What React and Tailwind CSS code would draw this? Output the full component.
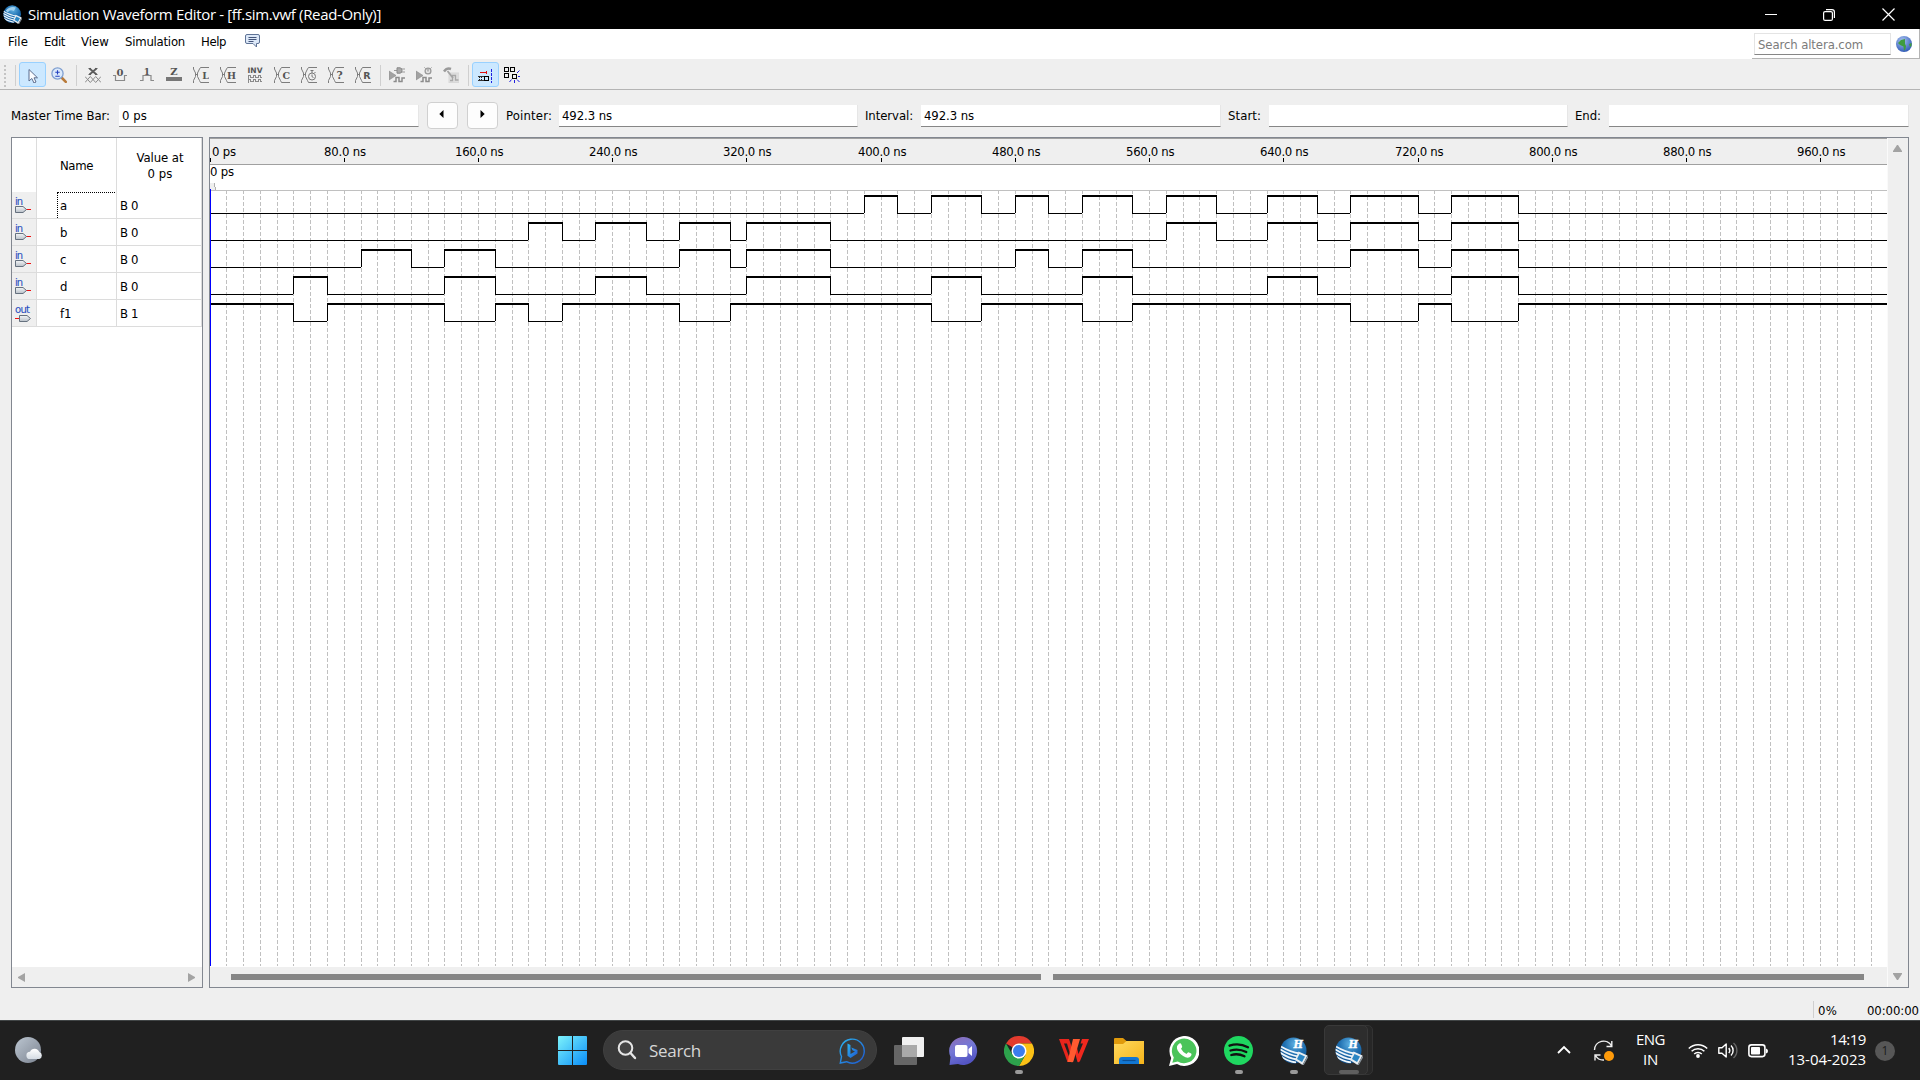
import { useLayoutEffect, useRef, useState } from "react";

const UI = "font-['DejaVu_Sans_Condensed','DejaVu_Sans',sans-serif]";
const SEGOE = "font-['Open_Sans','Noto_Sans',sans-serif]";

/* Text tracked so that it fills exactly w pixels. */
function T({ w, children, className = "" }) {
  const ref = useRef(null);
  const [ls, setLs] = useState(0);
  useLayoutEffect(() => {
    const n = ref.current.getBoundingClientRect().width;
    setLs((w - n) / String(children).length);
  }, []);
  return (
    <span className={"inline-block shrink-0 whitespace-nowrap " + className} style={{ width: w }}>
      <span ref={ref} className="inline-block" style={{ letterSpacing: ls }}>{children}</span>
    </span>
  );
}

function QuartusIcon({ size, mark }) {
  return (
    <svg width={size} height={size} viewBox="0 0 28 28">
      <defs>
        <radialGradient id="qg" cx="0.55" cy="0.25" r="0.8">
          <stop offset="0" stopColor="#5fb0e2" />
          <stop offset="0.5" stopColor="#1f6fb0" />
          <stop offset="1" stopColor="#0d4a86" />
        </radialGradient>
        <clipPath id="qc"><circle cx="13.5" cy="13.5" r="13" /></clipPath>
      </defs>
      <circle cx="13.5" cy="13.5" r="13" fill="url(#qg)" />
      <g clipPath="url(#qc)" fill="none" stroke="#eef5fa" strokeWidth="1.8">
        <path d="M0 9C5 12 12 15.500 20 16.500" />
        <path d="M0 12.300C5 15.500 11 18.500 18 19.500" />
        <path d="M0 15.600C5 19 10 21.500 17 22.500" />
        <path d="M1 19.500C5 22.500 10 24.500 16 25.500" />
      </g>
      {mark ? (
        <text x="13.500" y="11" fontSize="12" fontStyle="italic" fontWeight="bold" fill="#fff" stroke="#fff" strokeWidth=".5" fontFamily="Liberation Serif">H</text>
      ) : (
        <path d="M4 8Q10 1 19 3.500L16 9Q10 6 7 11Z" fill="#9fd0ee" />
      )}
      <path d="M18.500 14.500L27.500 18.500L22.500 28L15 23Z" fill="#e8edf1" />
      <path d="M19.500 17L25 19.500L22 25L17 22Z" fill="#2a86c4" />
      <path d="M27.500 18.500L28 20.500L23.500 28.500L22.500 28Z" fill="#8a949c" />
    </svg>
  );
}

/* ---------- toolbar ---------- */
const Ico = ({ children }) => (
  <svg width="16" height="16" viewBox="0 0 16 16" fill="none" stroke="#8a8a8a" strokeWidth="1">{children}</svg>
);
const Glyph = ({ x, y, s = 9.5, children, sans }) => (
  <text x={x} y={y} fontSize={s} fontWeight="bold" textAnchor="middle" fill="#545454" stroke="none" fontFamily={sans ? "DejaVu Sans" : "DejaVu Serif"}>{children}</text>
);
const Cross = () => <path d="M.5 0V2L2.500 6V9.500L.5 13.500V16M2.500 7.500H4.500M16 .5H7.500L6.500 2L4.500 6V9.500L6.500 13.500L7.500 15.500H16" stroke="#7d7d7d" />;

function ToolButton({ active, children }) {
  return (
    <div className={"flex h-[25px] w-[27px] shrink-0 justify-center rounded-[3px] border pr-px pt-1 " + (active ? "border-[#99d1ff] bg-[#cce8ff]" : "border-transparent")}>
      {children}
    </div>
  );
}
const Sep = () => <div className="flex h-[21px] w-[7px] shrink-0 justify-center"><div className="w-px bg-[#cfcfcf]" /></div>;

const SimIcon = ({ children }) => (
  <Ico>
    <path d="M0 4L7 8.500L0 13Z" fill="#a2a2a2" stroke="#8d8d8d" strokeWidth=".6" />
    <path d="M4.500 14.500H7V10.500H10V14.500H13V11H16" stroke="#8c8c8c" strokeWidth="1.500" />
    {children}
  </Ico>
);

function Toolbar() {
  return (
    <div className="flex h-[29px] items-start border-b border-[#b4b4b4] bg-[#efefef] pt-px">
      <div className="flex h-[25px] w-[12px] flex-col justify-between pl-1 pt-[3px]">
        {[0, 1, 2, 3, 4, 5].map((i) => <div key={i} className="size-[2px] bg-[#c4c4c4]" />)}
      </div>
      <div className="mt-[3px]"><Sep /></div>
      <ToolButton active>
        <svg width="16" height="16" viewBox="0 0 16 16"><path d="M5 2.500V14L7.800 11.500L10 16L12 15L10 10.800H13.500Z" fill="#fafcff" stroke="#5b6b8c" /></svg>
      </ToolButton>
      <ToolButton>
        <svg width="16" height="16" viewBox="0 0 16 16">
          <path d="M11 11L14.800 14.800" stroke="#b97b3b" strokeWidth="2.600" strokeLinecap="round" />
          <circle cx="6.500" cy="6.500" r="5.600" fill="#dbe9fb" stroke="#7f9fd0" strokeWidth="1.300" />
          <path d="M6.500 3.200V7.400M4.300 5.300H8.700M4.300 9.300H8.700" stroke="#2442c0" strokeWidth="1.100" />
        </svg>
      </ToolButton>
      <div className="mt-[3px]"><Sep /></div>
      <ToolButton>
        <Ico>
          <path d="M4.500 1.500L11.500 7.500M11.500 1.500L4.500 7.500" stroke="#5c5c5c" strokeWidth="1.800" />
          <path d="M3.500 1.500H6M10 1.500H12.500M3.500 7.500H6M10 7.500H12.500" stroke="#5c5c5c" />
          <path d="M0 9.500L5.300 15.500L10.700 9.500L16 15.500M0 15.500L5.300 9.500L10.700 15.500L16 9.500" />
        </Ico>
      </ToolButton>
      <ToolButton><Ico><Glyph x={8} y={9} s={10}>0</Glyph><path d="M1 8.500H3.500V13.500H12.500V8.500H15" strokeWidth="1.200" /></Ico></ToolButton>
      <ToolButton><Ico><Glyph x={8} y={7.500} s={9}>1</Glyph><path d="M1 13.500H4V8.500H12V13.500H15" strokeWidth="1.200" /></Ico></ToolButton>
      <ToolButton><Ico><Glyph x={8} y={8} s={10}>Z</Glyph><rect x="0" y="10" width="16" height="4" fill="#777" stroke="none" /></Ico></ToolButton>
      <ToolButton><Ico><Cross /><Glyph x={12.500} y={11.500}>L</Glyph></Ico></ToolButton>
      <ToolButton><Ico><Cross /><Glyph x={11.500} y={11.500}>H</Glyph></Ico></ToolButton>
      <ToolButton>
        <Ico>
          <Glyph x={8} y={6} s={7.500} sans>INV</Glyph>
          <path shapeRendering="crispEdges" d="M1 11.500V8.500H3.500V10.500H6V8.500H8.500V10.500H11V8.500H13.500V10.500H15M1 15.500V12.500H3.500V14.500H6V12.500H8.500V14.500H11V12.500H13.500V14.500H15" />
        </Ico>
      </ToolButton>
      <ToolButton><Ico><Cross /><Glyph x={12.200} y={11.500}>C</Glyph></Ico></ToolButton>
      <ToolButton><Ico><Cross /><circle cx="11" cy="9.500" r="3.500" fill="#efefef" stroke="#777" /><path d="M11 7.500V9.700L12.500 10.500M9.500 3.500H12.500M11 3.500V6M13.500 6L14.500 5" stroke="#777" /></Ico></ToolButton>
      <ToolButton><Ico><Cross /><Glyph x={11.500} y={11.500} s={10.500}>?</Glyph></Ico></ToolButton>
      <ToolButton><Ico><Cross /><Glyph x={12} y={11.500} sans>R</Glyph></Ico></ToolButton>
      <div className="mt-[3px]"><Sep /></div>
      <ToolButton><SimIcon><path d="M5 3.500H8M12 2H16M12 5H16" stroke="#999" /><path d="M8 .8H11Q13 1 13 3.500Q13 6 11 6.200H8Z" fill="#aaa" stroke="#888" /></SimIcon></ToolButton>
      <ToolButton><SimIcon><circle cx="12" cy="4" r="2.900" fill="#e4e4e4" stroke="#999" strokeWidth="1.300" /><path d="M12 2V4.500M8.500 .5L9.500 1.500M15.500 .5L14.500 1.500" stroke="#888" /></SimIcon></ToolButton>
      <ToolButton>
        <Ico>
          <rect x="6" y="6" width="10" height="9.500" fill="#dedede" stroke="#d8d8d8" />
          <path d="M7 13.500H9.500V8.500H12.500V13H15.500" stroke="#a8a8a8" strokeWidth="1.300" />
          <path d="M1 4.500Q4 .5 8 2" stroke="#999" strokeWidth="2.500" /><path d="M4.500 4L10 11" stroke="#a5a5a5" strokeWidth="1.800" />
        </Ico>
      </ToolButton>
      <div className="mt-[3px]"><Sep /></div>
      <ToolButton active>
        <Ico>
          <g shapeRendering="crispEdges">
            <path d="M3 5.500H10" stroke="#e01010" /><path d="M9.500 4V7" stroke="#e01010" />
            <path d="M1 9.500H7M1 13.500H7" stroke="#333" /><path d="M2.500 10V13M4.500 10V13" stroke="#222" strokeDasharray="1 1" />
            <path d="M7.500 9.500H11.500V13.500H7.500Z" stroke="#000" /><path d="M14.500 2V16" stroke="#2020e0" strokeDasharray="3 1" />
          </g>
        </Ico>
      </ToolButton>
      <ToolButton>
        <Ico>
          <g shapeRendering="crispEdges" stroke="#000"><path d="M.5 .5H4.500V4.500H.5ZM6.500 .5H10.500V4.500H6.500ZM.5 6.500H4.500V10.500H.5ZM8.500 7.500H12.500V11.500H8.500Z" /></g>
          <path d="M13 6L15.500 3.500M14 9.500H16M13 12.500L15.500 15M10.500 13V16M7.500 12.500L5.500 15" stroke="#2020e0" />
        </Ico>
      </ToolButton>
    </div>
  );
}

/* ---------- time bar ---------- */
const Field = ({ value, vw, className }) => (
  <div className={"mt-[3px] h-[22px] shrink-0 border-b border-b-[#868686] border-r border-r-[#e6e6e6] bg-white pl-[3px] text-[13px] leading-[21px] " + className}>
    {value && <T w={vw}>{value}</T>}
  </div>
);
const Step = ({ left }) => (
  <div className="flex h-[27px] w-[31px] shrink-0 items-center justify-center rounded-[4px] border border-[#d0d0d0] bg-[#fdfdfd]">
    <svg width="5" height="8" viewBox="0 0 5 8" className={left ? "-mt-[3px] mr-[3px]" : "-mt-[3px]"}><path d={left ? "M4.500 0V8L.3 4Z" : "M.5 0V8L4.700 4Z"} fill="#000" /></svg>
  </div>
);

function TimeBar() {
  return (
    <div className="flex h-[47px] items-start pl-[11px] pt-[12px] text-[13px] leading-[27px]">
      <T w={99}>Master Time Bar:</T>
      <Field className="ml-[9px] w-[300px]" value="0 ps" vw={25} />
      <div className="ml-2 flex gap-[9px]"><Step left /><Step /></div>
      <T w={46} className="ml-2">Pointer:</T>
      <Field className="ml-[7px] w-[299px]" value="492.3 ns" vw={50} />
      <T w={48} className="ml-[7px]">Interval:</T>
      <Field className="ml-2 w-[300px]" value="492.3 ns" vw={50} />
      <T w={33} className="ml-[7px]">Start:</T>
      <Field className="ml-2 w-[299px]" />
      <T w={26} className="ml-[7px]">End:</T>
      <Field className="ml-2 w-[300px]" />
    </div>
  );
}

/* ---------- signal list ---------- */
const SIGNALS = [
  { name: "a", v: "B 0", high: [[39, 41], [43, 46], [48, 50], [52, 55], [57, 60], [63, 66], [68, 72], [74, 78]] },
  { name: "b", v: "B 0", high: [[19, 21], [23, 26], [28, 31], [32, 37], [57, 60], [63, 66], [68, 72], [74, 78]] },
  { name: "c", v: "B 0", high: [[9, 12], [14, 17], [28, 31], [32, 37], [48, 50], [52, 55], [68, 72], [74, 78]] },
  { name: "d", v: "B 0", high: [[5, 7], [14, 17], [23, 26], [32, 37], [43, 46], [52, 55], [63, 66], [74, 78]] },
  { name: "f1", v: "B 1", out: true, high: [[0, 5], [7, 14], [17, 19], [21, 28], [31, 43], [46, 52], [55, 68], [72, 74], [78, 101]] },
];

function PinIcon({ out }) {
  return (
    <svg width="20" height="22" viewBox="0 0 20 22">
      <defs><linearGradient id="pin" x1="0" y1="0" x2="0" y2="1"><stop offset="0" stopColor="#f4f6f8" /><stop offset="1" stopColor="#b9c0c8" /></linearGradient></defs>
      <text x="0" y="8.500" fontSize="10" fill="#2a4fc0" stroke="#2a4fc0" strokeWidth=".1" fontFamily="DejaVu Sans" textLength={out ? 15 : 8}>{out ? "out" : "in"}</text>
      {out ? (
        <g><path d="M0 14.500H5" stroke="#f01010" /><path d="M4.500 11.500H12L15.500 14.500L12 17.500H4.500Z" fill="url(#pin)" stroke="#66717f" /></g>
      ) : (
        <g><path d="M11 13.500H16" stroke="#f01010" /><path d="M.5 10.500H8L11.500 13.500L8 16.500H.5Z" fill="url(#pin)" stroke="#66717f" /></g>
      )}
    </svg>
  );
}

function SignalList() {
  return (
    <div className="flex h-[851px] w-[192px] shrink-0 flex-col border border-[#828790] bg-white text-[13px]">
      <div className="flex h-[54px]">
        <div className="w-[25px] border-r border-[#dcdcdc]" />
        <div className="w-[80px] border-r border-[#dcdcdc] pl-[23px] pt-[20px] leading-4"><T w={33}>Name</T></div>
        <div className="flex w-[85px] flex-col items-center border-r border-[#dcdcdc] pl-[2px] pt-[12px] leading-4"><T w={47}>Value at</T><T w={25}>0 ps</T></div>
      </div>
      {SIGNALS.map((s, i) => (
        <div key={s.name} className="flex h-[27px] border-b border-[#dcdcdc] leading-[27px]">
          <div className="w-[25px] border-r border-[#dcdcdc] bg-[#efefef] pl-[3px] pt-[4px]"><PinIcon out={s.out} /></div>
          <div className="flex w-[80px] border-r border-[#dcdcdc] pl-[20px] pr-px">
            <div className={"w-full " + (i === 0 ? "h-[26px] border-l border-t border-dotted border-black pl-[2px] leading-[25px]" : "pl-[3px]")}>{s.name}</div>
          </div>
          <div className="w-[85px] border-r border-[#dcdcdc] pl-[3px]"><T w={18}>{s.v}</T></div>
        </div>
      ))}
      <div className="mt-auto flex h-5 items-center justify-between bg-[#efefef] pl-[6px] pr-[7px]">
        <svg width="7" height="9"><path d="M7 0V9L0 5V4Z" fill="#a3a3a3" /></svg>
        <svg width="7" height="9"><path d="M0 0V9L7 5V4Z" fill="#a3a3a3" /></svg>
      </div>
    </div>
  );
}

/* ---------- waveform ---------- */
const X = (t) => Math.floor(t * 16.7785);
const END = 1677;

function Wave({ high, y }) {
  const d = [];
  let cur = 0;
  high.forEach(([a, b]) => {
    const xa = X(a);
    const xb = Math.min(X(b), END);
    if (xa > cur) d.push(<rect key={"l" + a} x={cur} y={y + 18} width={xa - cur} height="1" />);
    d.push(<rect key={"h" + a} x={xa} y={y} width={xb - xa + 1} height="2" />);
    if (a > 0) d.push(<rect key={"r" + a} x={xa} y={y} width="1" height="18" />);
    if (xb < END) d.push(<rect key={"f" + a} x={xb} y={y} width="1" height="18" />);
    cur = xb;
  });
  if (cur < END) d.push(<rect key="end" x={cur} y={y + 18} width={END - cur} height="1" />);
  return <g fill="#000">{d}</g>;
}

function Waveform() {
  const labels = Array.from({ length: 12 }, (_, i) => i + 1);
  const grid = Array.from({ length: 99 }, (_, i) => i + 1);
  return (
    <div className="ml-[6px] flex h-[851px] w-[1700px] shrink-0 border border-[#828790]">
      <div className="flex w-[1677px] flex-col">
        <svg width="1677" height="27" viewBox="0 0 1677 27" shapeRendering="crispEdges">
          <rect width="1677" height="27" fill="#efefef" />
          <rect width="1677" height="1" fill="#a0a0a0" />
          <rect y="26" width="1677" height="1" fill="#a0a0a0" />
          <g fontSize="13" fontFamily="DejaVu Sans Condensed, DejaVu Sans">
            <text x="2" y="18" textLength="24">0 ps</text>
            <rect x="0" y="20" width="1" height="4" />
            {labels.map((i) => (
              <g key={i}>
                <text x={X(i * 8) - (i === 1 ? 20 : 23)} y="18" textLength={i === 1 ? 42 : 48.5}>{i * 80}.0 ns</text>
                <rect x={X(i * 8)} y="20" width="1" height="4" />
              </g>
            ))}
          </g>
        </svg>
        <svg width="1677" height="802" viewBox="0 0 1677 802" shapeRendering="crispEdges">
          <rect width="1677" height="802" fill="#fff" />
          <text x="0" y="11" fontSize="13" fontFamily="DejaVu Sans Condensed, DejaVu Sans" textLength="24">0 ps</text>
          <path d="M0 18H4V22H5V25H0Z" fill="#efefef" />
          <path d="M4.500 18V22M5.500 22V25" stroke="#b0b0b0" fill="none" />
          <g stroke="#c0c0c0" strokeDasharray="4 2">
            {grid.map((t) => <path key={t} d={`M${X(t) + 0.5} 25V801`} />)}
          </g>
          <rect y="25" width="1677" height="1" fill="#c0c0c0" />
          {SIGNALS.map((s, i) => <Wave key={s.name} high={s.high} y={30 + i * 27} />)}
          <rect y="24" width="1" height="777" fill="#0000ff" />
        </svg>
        <div className="flex h-5 items-center bg-[#efefef] pl-[21px]">
          <div className="h-[6px] w-[810px] bg-[#868686]" />
          <div className="ml-3 h-[6px] w-[811px] bg-[#868686]" />
        </div>
      </div>
      <div className="flex w-[21px] flex-col items-center justify-between border-l border-[#fafafa] bg-[#efefef] pb-[7px] pr-[2px] pt-[7px]">
        <svg width="9" height="7"><path d="M0 7H9V6L5 0H4L0 6Z" fill="#a3a3a3" /></svg>
        <svg width="9" height="7"><path d="M0 0H9V1L5 7H4L0 1Z" fill="#a3a3a3" /></svg>
      </div>
    </div>
  );
}

/* ---------- taskbar ---------- */
function Slot({ children, dot, active }) {
  return (
    <div className="relative flex h-[59px] w-[55px] shrink-0 items-center justify-center">
      {active && (
        <>
          <div className="absolute left-[10px] top-[4px] h-[50px] w-[42px] rounded-[5px] border border-[#333] bg-[#272727]" />
          <div className="absolute left-[3px] top-[4px] h-[50px] w-[44px] rounded-[5px] border border-[#393939] bg-[#2d2d2d]" />
        </>
      )}
      <div className="relative">{children}</div>
      {dot && <div className={"absolute top-[49px] h-[4px] rounded-full " + (active ? "w-5 bg-[#5f5f5f]" : "w-2 bg-[#9a9a9a]")} />}
    </div>
  );
}

function Taskbar() {
  return (
    <div className={"flex h-[60px] items-start border-t border-[#414546] bg-[#202020] text-white " + SEGOE}>
      <div className="flex h-[59px] w-[545px] items-center pl-[15px]">
        <svg width="29" height="27" viewBox="0 0 29 27">
          <defs>
            <linearGradient id="moon" x1="0" y1="0" x2="1" y2="1"><stop offset="0" stopColor="#bcc6d1" /><stop offset="1" stopColor="#7b8390" /></linearGradient>
            <linearGradient id="cl" x1="0" y1="0" x2="0" y2="1"><stop offset="0" stopColor="#fff" /><stop offset="1" stopColor="#d5dce4" /></linearGradient>
          </defs>
          <circle cx="13" cy="13" r="13" fill="url(#moon)" />
          <path d="M15 22a3.600 3.600 0 0 1 0-7.200a5 5 0 0 1 9.300 .3a3.600 3.600 0 0 1 0 6.900Z" fill="url(#cl)" />
        </svg>
      </div>
      <Slot>
        <svg width="29" height="29" viewBox="0 0 29 29">
          <defs><linearGradient id="win" x1="0" y1="0" x2="1" y2="1"><stop offset="0" stopColor="#7df3fb" /><stop offset="1" stopColor="#0a8df8" /></linearGradient></defs>
          <path d="M0 1Q0 0 1 0H14V14H0ZM15 0H28Q29 0 29 1V14H15ZM0 15H14V29H1Q0 29 0 28ZM15 15H29V28Q29 29 28 29H15Z" fill="url(#win)" />
        </svg>
      </Slot>
      <div className="ml-[3px] mr-[4px] mt-[9px] flex h-[40px] w-[274px] shrink-0 items-center rounded-full border border-[#404040] bg-[#3a3a3a] pl-[13px]">
        <svg width="20" height="20" viewBox="0 0 20 20"><circle cx="8.500" cy="8" r="6.800" fill="#454545" stroke="#e6e6e6" strokeWidth="2" /><path d="M13.500 13L18 18" stroke="#e6e6e6" strokeWidth="2.400" strokeLinecap="round" /></svg>
        <T w={52} className="ml-[12px] mt-[2px] text-[17px] leading-5 text-[#d6d6d6]">Search</T>
        <svg width="26" height="26" viewBox="0 0 26 26" className="ml-[138px] mt-px">
          <defs><linearGradient id="bg" x1="0" y1="0" x2="1" y2="1"><stop offset="0" stopColor="#2cb4f0" /><stop offset="1" stopColor="#1e58d0" /></linearGradient></defs>
          <path d="M2.500 18.500A12 12 0 1 1 7.500 23.700L1.300 25Z" fill="none" stroke="url(#bg)" strokeWidth="1.400" />
          <path d="M8.500 5.500L11.500 7V16L16 13.500L13.500 12.300L12.300 9.500L18.500 12V15.500L11.500 20L8.500 17.800Z" fill="url(#bg)" />
        </svg>
      </div>
      <Slot>
        <svg width="30" height="28" viewBox="0 0 30 28">
          <rect x="8" y="0" width="22" height="20" rx="1" fill="#f0f0f0" />
          <rect x="0" y="8" width="23" height="20" rx="1" fill="#666" />
          <rect x="8" y="8" width="15" height="12" fill="#a9a9a9" />
        </svg>
      </Slot>
      <Slot>
        <svg width="29" height="28" viewBox="0 0 29 28">
          <defs><linearGradient id="chat" x1="0" y1="0" x2=".4" y2="1"><stop offset="0" stopColor="#8f6cb4" /><stop offset=".5" stopColor="#7478d6" /><stop offset="1" stopColor="#5455c4" /></linearGradient></defs>
          <path d="M.5 28L1.500 20A14 14 0 1 1 9 27Z" fill="url(#chat)" />
          <rect x="6" y="8" width="12.500" height="12" rx="2" fill="#fff" /><path d="M19.500 12L23 9V19L19.500 16Z" fill="#fff" />
        </svg>
      </Slot>
      <Slot dot>
        <svg width="30" height="30" viewBox="0 0 30 30">
          <path d="M15 15L2 7.500A15 15 0 0 1 28 7.500H15Z" fill="#e33b2e" />
          <path d="M28 7.500A15 15 0 0 1 15 30L21.500 18.700L15 7.500Z" fill="#fbc116" />
          <path d="M2 7.500A15 15 0 0 0 15 30L21.500 18.700L15 15L8.500 18.700Z" fill="#2da24c" />
          <circle cx="15" cy="15" r="7.500" fill="#fff" /><circle cx="15" cy="15" r="6" fill="#3b7ded" />
        </svg>
      </Slot>
      <Slot>
        <svg width="30" height="24" viewBox="0 0 30 24">
          <path d="M0 0H10L14 12L11 23H8.500Z" fill="#e8251c" />
          <path d="M5 4.500H8L11 15L9.800 17Z" fill="#202020" />
          <path d="M15.500 12L18 9L19.500 15L24 4.500H21.500L23 0H30L21 22Q20.500 23.500 18.500 23Z" fill="#f0281e" />
          <path d="M14 0H21L14.500 22Q14 24 12 23H8.500Z" fill="#ff5a30" />
        </svg>
      </Slot>
      <Slot>
        <svg width="30" height="26" viewBox="0 0 30 26">
          <defs><linearGradient id="fo" x1="0" y1="0" x2="1" y2="1"><stop offset="0" stopColor="#ffd95e" /><stop offset="1" stopColor="#f6b41a" /></linearGradient></defs>
          <path d="M0 1Q0 0 1 0H9L12.500 3H29Q30 3 30 4V10H0Z" fill="#e09a0c" />
          <path d="M0 6H9L12.500 3H30V26H0Z" fill="url(#fo)" />
          <path d="M5 26V22Q5 19 8 19H22Q25 19 25 22V26Z" fill="#1277d3" /><path d="M8.500 22.500H21.500" stroke="#0b4f95" strokeWidth="1.200" />
        </svg>
      </Slot>
      <Slot>
        <svg width="30" height="30" viewBox="0 0 30 30">
          <path d="M0 30L2.200 22A15 15 0 1 1 8 28Z" fill="#fff" />
          <path d="M3.300 26.800L4.800 21.500A12.300 12.300 0 1 1 8.800 25.400Z" fill="#4ac45a" />
          <path d="M10.300 7.500Q11.800 7 12.300 8.300L13.200 10.600Q13.300 11.500 12 12.700Q14 16.500 17.500 17.900Q18.800 16.200 19.500 16.300L22.200 17.600Q23 18.200 22 20Q20 22.500 16.500 21.200Q11.500 19.300 8.700 14.500Q6.500 10 10.300 7.500Z" fill="#fff" />
        </svg>
      </Slot>
      <Slot dot>
        <svg width="29" height="29" viewBox="0 0 29 29">
          <circle cx="14.500" cy="14.500" r="14.500" fill="#1fd760" />
          <path d="M5.500 9.700Q15 6.500 24 11.300M6.500 14.500Q14.500 12 22.300 16M7.300 19Q14 17 20.500 20.300" fill="none" stroke="#111" strokeWidth="2.300" strokeLinecap="round" />
        </svg>
      </Slot>
      <Slot dot><QuartusIcon size={28} mark /></Slot>
      <Slot dot active><QuartusIcon size={28} mark /></Slot>

      <div className="ml-auto flex h-[59px] shrink-0 items-center pr-[25px]">
        <svg width="14" height="9" viewBox="0 0 14 9" className="-mt-[2px]"><path d="M1 8L7 2L13 8" fill="none" stroke="#fff" strokeWidth="1.800" /></svg>
        <svg width="22" height="22" viewBox="0 0 22 22" className="ml-[22px]">
          <path d="M1.500 10A9 9 0 0 1 18.500 6M18.800 1V6.500H13.500M2 20.500V15H7.500M2.500 15.500A9 9 0 0 0 11 20" fill="none" stroke="#f0f0f0" strokeWidth="1.400" />
          <circle cx="16" cy="16" r="5" fill="#ff9b0a" />
        </svg>
        <div className="-mt-[3px] ml-[21px] flex flex-col items-center text-[15px] leading-[20px]"><T w={29}>ENG</T><T w={15}>IN</T></div>
        <svg width="20" height="15" viewBox="0 0 20 15" className="-mt-px ml-[23px]">
          <path d="M.8 5.500A13 13 0 0 1 19.200 5.500M3.600 8.300A9 9 0 0 1 16.400 8.300M6.200 11A5.400 5.400 0 0 1 13.800 11" fill="none" stroke="#fff" strokeWidth="1.500" />
          <circle cx="10" cy="13" r="1.900" fill="#fff" />
        </svg>
        <svg width="20" height="17" viewBox="0 0 20 17" className="ml-[10px]">
          <path d="M.8 5.800H4L8.200 2V15L4 11.200H.8Z" fill="none" stroke="#fff" strokeWidth="1.400" strokeLinejoin="round" />
          <path d="M10.800 6A4 4 0 0 1 10.800 11M13 3.500A7 7 0 0 1 13 13.500" fill="none" stroke="#fff" strokeWidth="1.400" />
          <path d="M15.500 1A10 10 0 0 1 15.500 16" fill="none" stroke="#666" strokeWidth="1.400" />
        </svg>
        <svg width="20" height="14" viewBox="0 0 20 14" className="ml-[10px]">
          <rect x=".9" y=".9" width="16" height="11.700" rx="2.500" fill="none" stroke="#fff" strokeWidth="1.600" />
          <rect x="3" y="3" width="9" height="7.500" rx=".8" fill="#fff" /><path d="M18 4.500Q20 5 20 7Q20 9 18 9.500Z" fill="#fff" />
        </svg>
        <div className="-mt-[4px] ml-5 flex flex-col items-end text-[15px] leading-[20px]"><T w={36}>14:19</T><T w={78}>13-04-2023</T></div>
        <div className="ml-[9px] flex size-5 items-center justify-center rounded-full bg-[#575757] text-[12px] text-[#1c1c1c]">1</div>
      </div>
    </div>
  );
}

export default function App() {
  return (
    <div className={"flex h-[1080px] w-[1920px] flex-col overflow-hidden bg-[#efefef] text-black " + UI}>
      <div className={"flex h-[29px] shrink-0 items-center bg-black pl-[3px] text-white " + SEGOE}>
        <QuartusIcon size={19} />
        <T w={353} className="ml-[6px] text-[15px] leading-[29px]">Simulation Waveform Editor - [ff.sim.vwf (Read-Only)]</T>
        <div className="ml-auto flex items-center pr-[25px]">
          <div className="h-px w-3 bg-white" />
          <svg width="12" height="12" viewBox="0 0 12 12" className="ml-[46px]" fill="none" stroke="#fff" strokeWidth="1.200"><rect x=".6" y="2.600" width="8.800" height="8.800" rx="1.500" /><path d="M3 .6H9Q11.400 .6 11.400 3V9" /></svg>
          <svg width="13" height="13" viewBox="0 0 13 13" className="ml-[47px]" stroke="#fff" strokeWidth="1.200"><path d="M.5 .5L12.500 12.500M12.500 .5L.5 12.500" /></svg>
        </div>
      </div>
      <div className="flex h-[31px] shrink-0 items-start border-b border-[#efefef] bg-white pl-2 text-[13px] leading-[25px]">
        <T w={20}>File</T>
        <T w={21} className="ml-4">Edit</T>
        <T w={28} className="ml-4">View</T>
        <T w={60} className="ml-4">Simulation</T>
        <T w={25} className="ml-4">Help</T>
        <svg width="15" height="14" viewBox="0 0 15 14" className="ml-[19px] mt-[5px]"><path d="M2 .5H13Q14.500 .5 14.500 2V8Q14.500 9.500 13 9.500H11.500V13L8 9.500H2Q.5 9.500 .5 8V2Q.5 .5 2 .5Z" fill="#dce8f8" stroke="#5f7396" /><path d="M3.500 3.500H11.500M3.500 5.500H11.500M3.500 7.500H8.500" stroke="#44557a" /></svg>
        <div className="ml-auto flex h-[30px] w-[168px] border-b border-r border-[#b4b4b4] pl-[2px] pt-1">
          <div className="h-[22px] w-[137px] border border-[#e4e4e4] border-b-[#868686] pl-[3px] leading-[22px] text-[#7b7b7b]"><T w={105}>Search altera.com</T></div>
          <svg width="16" height="16" viewBox="0 0 16 16" className="ml-[5px] mt-[3px]">
            <defs><radialGradient id="gl" cx=".4" cy=".3" r=".75"><stop offset="0" stopColor="#a9c4f2" /><stop offset="1" stopColor="#2b55b5" /></radialGradient></defs>
            <circle cx="8" cy="8" r="8" fill="url(#gl)" />
            <path d="M2 7L5 4L9 3V8L10 10L9.500 13L8 15L7.500 10.500L4 9ZM13 8L15.500 7V10L14 11Z" fill="#3f9c3f" />
          </svg>
        </div>
      </div>
      <div className="shrink-0 pt-px"><Toolbar /></div>
      <TimeBar />
      <div className="flex pl-[11px]">
        <SignalList />
        <Waveform />
      </div>
      <div className="flex h-[32px] shrink-0 justify-end pr-px pt-[13px] text-[13px] leading-[20px]">
        <div className="h-[17px] w-px bg-[#cfcfcf]" />
        <T w={19} className="ml-1">0%</T>
        <T w={52} className="ml-[30px]">00:00:00</T>
      </div>
      <div className="shrink-0"><Taskbar /></div>
    </div>
  );
}
